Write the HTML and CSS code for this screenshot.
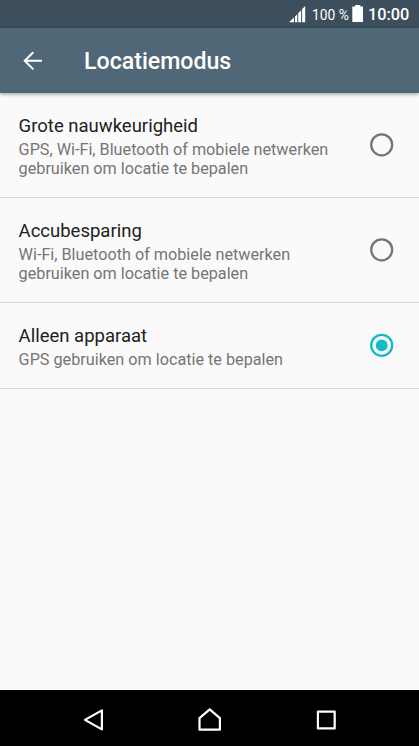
FILE: index.html
```html
<!DOCTYPE html>
<html lang="nl">
<head>
<meta charset="utf-8">
<title>Locatiemodus</title>
<link rel="stylesheet" href="styles.css">
</head>
<body>
<div class="screen">
  <div class="status">
    <svg class="signal" width="17" height="18" viewBox="0 0 17 18" fill="#fff"><path d="M0 17.2L5 12.4V17.2ZM6 11.4L8.3 9.2V17.2H6ZM9.3 8.1L12.1 5.2V17.2H9.3ZM13.1 4.1L16.2 1V17.2H13.1Z"/></svg>
    <span class="percent">100 %</span>
    <svg class="battery" width="12" height="18" viewBox="0 0 12 18" fill="#fff"><path d="M3.3 0H8.3V1.4H11V17H.3V1.4H3.3Z"/></svg>
    <span class="clock">10:00</span>
  </div>
  <header class="bar">
    <svg class="back" width="20" height="20" viewBox="0 0 20 20" fill="none" stroke="#fff" stroke-width="2"><path d="M19 9.8H1.8M10.3 1.2L1.7 9.8L10.3 18.4"/></svg>
    <h1>Locatiemodus</h1>
  </header>
  <main class="list">
    <div class="row">
      <div class="label">
        <h2 class="name">Grote nauwkeurigheid</h2>
        <p>GPS, Wi-Fi, Bluetooth of mobiele netwerken<br>gebruiken om locatie te bepalen</p>
      </div>
      <svg class="radio" width="24" height="24" viewBox="0 0 24 24"><circle cx="11.7" cy="11.8" r="10.5"/></svg>
    </div>
    <div class="row">
      <div class="label">
        <h2 class="name">Accubesparing</h2>
        <p>Wi-Fi, Bluetooth of mobiele netwerken<br>gebruiken om locatie te bepalen</p>
      </div>
      <svg class="radio" width="24" height="24" viewBox="0 0 24 24"><circle cx="11.7" cy="11.8" r="10.5"/></svg>
    </div>
    <div class="row">
      <div class="label">
        <h2 class="name">Alleen apparaat</h2>
        <p>GPS gebruiken om locatie te bepalen</p>
      </div>
      <svg class="radio checked" width="24" height="24" viewBox="0 0 24 24"><circle cx="11.7" cy="12.3" r="10.5"/><circle class="dot" cx="11.7" cy="12.3" r="5.9"/></svg>
    </div>
  </main>
  <nav class="nav">
    <svg width="24" height="24" viewBox="0 0 24 24"><path d="M20.9 2.4V21.4L3.9 11.9Z"/></svg>
    <svg width="24" height="24" viewBox="0 0 24 24"><path d="M1.5 21.7V10.2L11.7 1.3L21.9 10.2V21.7Z"/></svg>
    <svg width="24" height="24" viewBox="0 0 24 24"><path d="M2.9 3.7H19.7V20.4H2.9Z"/></svg>
  </nav>
</div>
</body>
</html>
```
FILE: styles.css
```css
* {
  box-sizing: border-box;
}

body, h1, h2, p {
  margin: 0;
}

body {
  font-family: Roboto, "Liberation Sans", sans-serif;
}

.screen {
  display: flex;
  flex-direction: column;
  width: 419px;
  height: 746px;
  overflow: hidden;
  background: #fafafa;
}

svg {
  display: block;
  flex: none;
}

.status {
  display: flex;
  flex: none;
  align-items: flex-start;
  justify-content: flex-end;
  height: 28px;
  padding: 5px 9px 0 0;
  background: #3d4f5d;
  color: #fff;
  white-space: nowrap;
}

.signal {
  margin-right: 6px;
}

.percent {
  width: 40px;
  font-size: 13.8px;
  line-height: 20px;
}

.battery {
  margin-right: 4px;
}

.clock {
  width: 42px;
  font-size: 16.3px;
  font-weight: 500;
  line-height: 20px;
}

.bar {
  display: flex;
  flex: none;
  align-items: center;
  height: 65px;
  padding-left: 23px;
  background: #506778;
  color: #fff;
  box-shadow: 0 1px 4px rgba(0, 0, 0, 0.4);
}

.bar h1 {
  margin-left: 41px;
  padding-top: 3px;
  font-size: 23.15px;
  font-weight: 500;
  line-height: 28px;
}

.list {
  flex: 1;
}

.row {
  display: flex;
  align-items: center;
  justify-content: space-between;
  height: 105px;
  padding: 0 25px 0 18.6px;
  border-bottom: 1px solid #d9d9d9;
}

.row:last-child {
  height: 86px;
}

.row:last-child .radio {
  margin-bottom: 1px;
}

.label {
  padding-top: 2px;
}

.name {
  margin-bottom: 2px;
  color: #212121;
  font-size: 18.5px;
  font-weight: 400;
  line-height: 24px;
}

.label p {
  color: #757575;
  font-size: 16.22px;
  line-height: 19px;
  white-space: nowrap;
}

.radio {
  fill: none;
  stroke: #757575;
  stroke-width: 2.3;
}

.checked {
  stroke: #0dbcc7;
}

.dot {
  fill: #0dbcc7;
  stroke: none;
}

.nav {
  display: flex;
  flex: none;
  align-items: center;
  justify-content: center;
  gap: 93px;
  height: 56px;
  padding-top: 3px;
  background: #000;
}

.nav svg {
  fill: none;
  stroke: #fff;
  stroke-width: 2.2;
  stroke-linejoin: round;
}
```
